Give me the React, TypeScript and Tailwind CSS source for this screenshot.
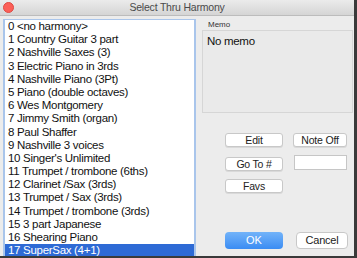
const items = [
  '0 <no harmony>',
  '1 Country Guitar 3 part',
  '2 Nashville Saxes (3)',
  '3 Electric Piano in 3rds',
  '4 Nashville Piano (3Pt)',
  '5 Piano (double octaves)',
  '6 Wes Montgomery',
  '7 Jimmy Smith (organ)',
  '8 Paul Shaffer',
  '9 Nashville 3 voices',
  "10 Singer's Unlimited",
  '11 Trumpet / trombone (6ths)',
  '12 Clarinet /Sax (3rds)',
  '13 Trumpet / Sax (3rds)',
  '14 Trumpet / trombone (3rds)',
  '15 3 part Japanese',
  '16 Shearing Piano',
  '17 SuperSax (4+1)',
];

const btn =
  'h-[14px] rounded-[3px] bg-white border border-[#c8c8c8] shadow-[0_1px_0_rgba(0,0,0,0.08)] text-[10.5px] tracking-[-0.2px] leading-[12px] text-[#222] flex items-center justify-center';

export default function App() {
  return (
    <div className="w-[357px] h-[258px] overflow-hidden bg-[#ececec] flex flex-col border-r-[3px] border-b-[2px] border-[#3a3a3a] font-['Liberation_Sans',Arial,sans-serif]">
      {/* Title bar */}
      <div className="h-[16px] shrink-0 relative flex items-center justify-center bg-gradient-to-b from-[#ebebeb] to-[#d5d5d5] border-b border-[#bcbcbc]">
        <div className="absolute left-[3px] top-[2px] w-[11px] h-[11px] rounded-full bg-[#fc5f57] border border-[#de4a43]" />
        <span className="text-[10.5px] tracking-[-0.2px] leading-none text-[#4a4a4a]">Select Thru Harmony</span>
      </div>

      <div className="flex flex-1 min-h-0 overflow-hidden pt-[3px] pl-[3px]">
        {/* Harmony list */}
        <div className="w-[193px] h-full bg-white border-2 border-t border-b-0 border-[#a9c5eb] overflow-hidden">
          {items.map((t, i) => (
            <div
              key={t}
              className={
                'h-[13.2px] leading-[13.2px] text-[11.5px] tracking-[-0.3px] pl-[3px] whitespace-nowrap ' +
                (i === 17 ? 'bg-[#2e6ad5] text-white' : 'text-[#111]')
              }
            >
              {t}
            </div>
          ))}
        </div>

        {/* Right panel */}
        <div className="flex-1 flex flex-col pl-[6px] pr-[1px]">
          <div className="text-[8px] leading-[9px] text-[#333] pl-[6px] pt-[1px]">Memo</div>
          <div className="mt-[1px] h-[83px] bg-[#eaeaea] border border-[#d6d6d6] px-[4px] pt-[3px] text-[11.5px] tracking-[-0.3px] leading-[14px] text-[#111]">
            No memo
          </div>

          <div className="mt-[20px] pl-[23px] flex flex-col">
            <div className="flex gap-[10px] items-center">
              <div className={btn + ' w-[58px]'}>Edit</div>
              <div className={btn + ' w-[54px]'}>Note Off</div>
            </div>
            <div className="flex gap-[11px] items-center mt-[7px]">
              <div className={btn + ' w-[58px] mt-[3px]'}>Go To #</div>
              <div className="w-[53px] h-[15px] bg-white border border-[#c6c6c6]" />
            </div>
            <div className="flex mt-[8px]">
              <div className={btn + ' w-[58px]'}>Favs</div>
            </div>
          </div>

          <div className="mt-auto mb-[7px] pl-[23px] flex gap-[13px]">
            <div className="w-[58px] h-[17px] rounded-[4px] bg-gradient-to-b from-[#72b3f9] to-[#3a8cf3] text-white text-[11px] flex items-center justify-center">
              OK
            </div>
            <div className="w-[52px] h-[17px] rounded-[4px] bg-white border border-[#c8c8c8] text-[11px] tracking-[-0.2px] text-[#222] flex items-center justify-center">
              Cancel
            </div>
          </div>
        </div>
      </div>
    </div>
  );
}
